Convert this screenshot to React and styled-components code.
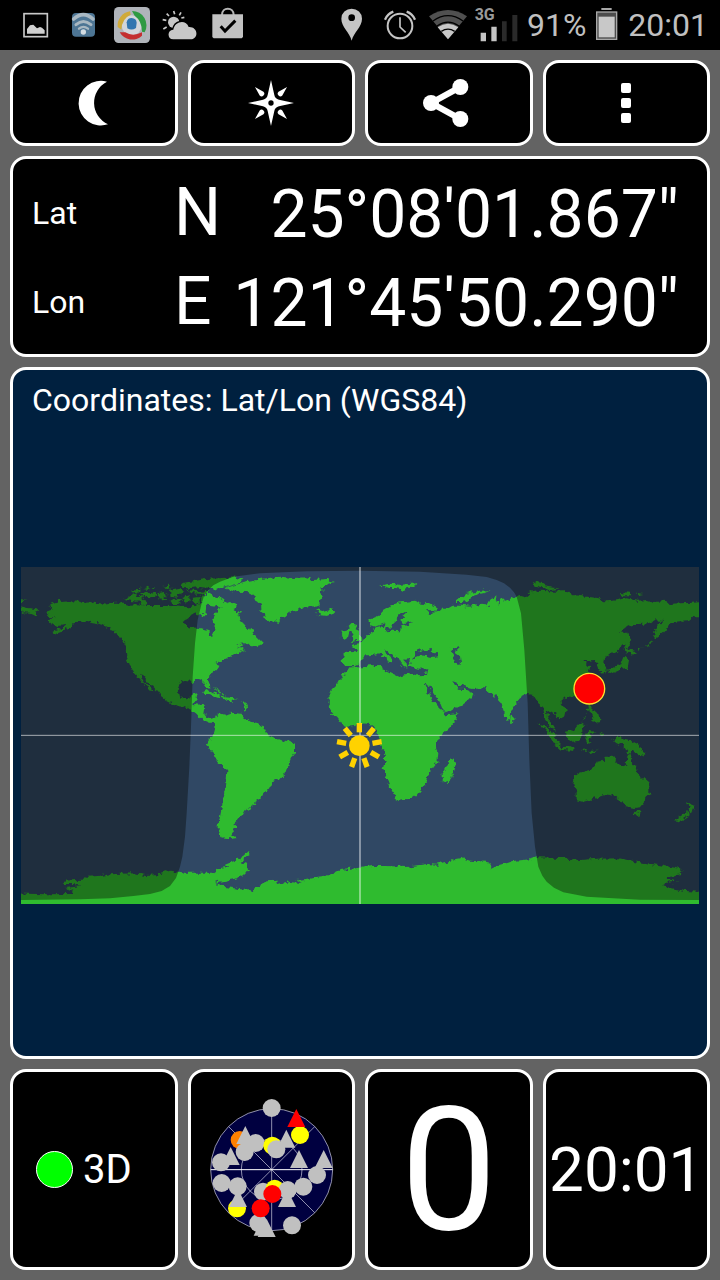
import styled, { createGlobalStyle } from 'styled-components';

const GlobalStyle = createGlobalStyle`
  * {
    box-sizing: border-box;
  }
  body {
    margin: 0;
    background: #636363;
    color: #fff;
    font-family: Roboto, 'Liberation Sans', sans-serif;
  }
`;

const Page = styled.div`
  display: flex;
  flex-direction: column;
  min-height: 100vh;
`;

const StatusBar = styled.header`
  display: flex;
  justify-content: space-between;
  align-items: center;
  height: 50px;
  padding: 0 12px 0 18px;
  background: #000;
  color: #c0c0c0;
`;

const StatusGroup = styled.div`
  display: flex;
  align-items: center;
  gap: ${(props) => props.$gap}px;
`;

const StatusIcon = styled.svg`
  display: block;
  flex: none;
  overflow: visible;
  width: ${(props) => props.$width || 36}px;
  height: 36px;
`;

const StatusText = styled.span`
  font-size: 32px;
  line-height: 36px;
`;

const Main = styled.main`
  flex: 1;
  display: flex;
  flex-direction: column;
  gap: 10px;
  padding: 10px;
`;

const Row = styled.div`
  display: grid;
  grid-template-columns: repeat(4, 1fr);
  gap: 10px;
`;

const ToolButton = styled.button`
  display: flex;
  align-items: center;
  justify-content: center;
  height: 86px;
  padding: 0;
  border: 3px solid #fff;
  border-radius: 16px;
  background: #000;
  color: #fff;
  cursor: pointer;

  & svg {
    width: 50px;
    height: 50px;
    overflow: visible;
  }
`;

const Panel = styled.section`
  border: 3px solid #fff;
  border-radius: 16px;
  background: #000;
`;

const Position = styled(Panel)`
  height: 201px;
  padding: 9px 28px 8px 19px;
`;

const PositionLine = styled.div`
  display: grid;
  grid-template-columns: 142px auto 1fr;
  align-items: center;
  height: 89px;
`;

const Label = styled.span`
  font-size: 32px;
`;

const Hemisphere = styled.span`
  font-size: 66px;
`;

const Degrees = styled.span`
  padding-top: 4px;
  font-size: 66px;
  text-align: right;
  white-space: nowrap;
`;

const MapPanel = styled(Panel)`
  flex: 1;
  display: flex;
  flex-direction: column;
  padding: 0 8px;
  background: #00203f;
`;

const MapTitle = styled.h1`
  margin: 0;
  padding: 14px 11px 0;
  font-size: 32px;
  font-weight: 400;
  line-height: 32px;
`;

const MapArea = styled.div`
  flex: 1;
  display: flex;
  align-items: center;
  padding-bottom: 2px;

  & svg {
    display: block;
    width: 100%;
  }
`;

const Cell = styled(Panel)`
  display: flex;
  align-items: center;
  justify-content: ${(props) => (props.$start ? 'flex-start' : 'center')};
  gap: 10px;
  height: 201px;
  padding-left: ${(props) => (props.$start ? 23 : 0)}px;
  font-size: ${(props) => props.$size || 40}px;
  line-height: 1;
`;

const FixDot = styled.span`
  width: 37px;
  height: 37px;
  border: 1px solid #fff;
  border-radius: 50%;
  background: #00ff00;
`;

const land = [
  // north america
  'M75 157L100 147L92 140L84 138L90 132L118 122L128 126L150 124L180 125L186 129L215 127L250 134L262 130L290 128L330 134L355 133L380 138L420 138L450 138L480 140L510 142L530 135L545 130L548 105L560 108L566 92L575 108L598 112L612 120L618 130L630 126L650 135L655 145L640 150L665 158L655 166L660 180L672 192L685 206L700 212L710 230L725 245L722 258L708 262L695 258L680 252L668 243L658 248L672 252L650 262L665 262L675 270L660 275L655 282L640 280L632 290L610 295L604 304L590 308L597 322L585 335L565 346L564 360L570 375L571 390L562 385L552 366L540 358L525 357L518 366L495 362L478 370L473 390L478 412L500 418L512 412L515 403L533 400L530 415L522 425L520 432L548 435L552 445L550 460L560 472L578 476L590 470L585 490L570 488L545 478L530 462L515 450L490 440L470 437L440 422L420 405L405 385L385 368L372 352L360 345L372 366L390 382L400 391L385 388L370 368L345 340L332 322L322 295L320 260L313 245L300 235L290 218L276 212L270 203L258 200L250 195L235 190L215 187L200 182L185 185L165 186L150 200L135 210L100 222L98 215L130 203L140 195L110 198L95 192L86 184L88 176L105 172L85 171L90 162Z',
  // arctic islands
  'M313 118L330 106L345 100L350 110L372 110L366 122L345 125Z M355 124L372 120L385 130L372 138Z M330 95L345 87L362 88L352 98Z M360 98L395 96L410 104L392 112L368 110Z M372 84L384 80L390 88Z M395 84L408 82L402 90Z M428 78L446 74L458 84L440 90Z M412 100L432 96L446 104L430 112L440 122L420 124Z M450 92L480 86L492 98L470 104L478 114L452 110Z M448 122L470 116L488 122L475 132L455 132Z M486 112L510 106L512 122L496 128Z M516 114L538 110L540 128L524 132Z M500 90L535 94L562 96L575 102L548 102L515 100Z M485 70L505 66L560 57L640 52L665 58L645 68L600 77L580 85L540 81L512 84L490 80Z M580 74L610 58L670 56L662 68L618 80L574 90Z',
  // greenland, iceland, svalbard
  'M612 84L665 70L680 64L710 58L780 50L820 54L860 52L880 60L920 57L945 66L920 73L925 80L900 82L912 90L900 98L908 108L905 118L898 128L900 136L888 140L865 135L850 143L840 145L828 154L810 155L796 168L785 170L775 190L768 184L750 185L735 175L732 165L725 155L723 135L712 126L705 110L690 98L680 96L645 95Z M885 155L898 149L905 153L918 149L940 148L945 158L920 168L895 165L904 160Z M1080 76L1110 71L1140 74L1192 70L1186 81L1165 80L1150 89L1128 84L1108 84Z',
  // british isles
  'M985 202L995 191L1010 194L1004 206L1020 214L1020 226L1031 234L1024 243L1008 243L992 247L1000 238L992 232L998 222L988 216Z M962 231L970 222L966 212L985 208L988 216L984 232L970 237Z',
  // eurasia and africa
  'M975 318L968 300L972 280L985 276L1008 277L1012 266L994 256L1003 252L1018 250L1030 240L1042 226L1060 216L1067 202L1083 198L1090 205L1098 198L1092 190L1065 200L1052 196L1048 176L1075 168L1090 152L1108 142L1115 133L1145 127L1185 122L1200 128L1222 130L1250 143L1248 152L1218 150L1228 160L1250 156L1260 146L1282 146L1298 137L1320 137L1350 140L1380 134L1402 136L1412 118L1428 110L1436 134L1442 114L1456 122L1470 116L1500 108L1514 112L1530 98L1560 92L1605 95L1645 93L1660 106L1700 110L1740 115L1756 124L1780 122L1820 115L1850 122L1880 120L1904 127L1930 122L1950 132L1980 130L2020 128L2060 125L2060 172L2020 172L2010 180L1990 182L1980 187L1950 190L1942 206L1930 220L1910 235L1900 228L1900 212L1912 196L1930 183L1900 181L1890 190L1860 192L1840 192L1822 200L1800 218L1820 218L1826 232L1815 250L1790 272L1760 285L1752 295L1750 310L1758 332L1745 338L1735 320L1738 310L1720 300L1705 303L1690 303L1702 317L1716 318L1700 330L1712 345L1705 380L1660 408L1640 412L1625 418L1625 430L1640 450L1636 468L1618 478L1605 462L1590 452L1580 455L1588 480L1605 498L1610 516L1590 502L1575 478L1570 442L1555 430L1540 405L1525 402L1500 415L1485 432L1475 450L1470 475L1463 480L1452 462L1440 425L1430 406L1422 410L1410 395L1395 385L1360 387L1340 383L1330 386L1360 400L1356 412L1340 425L1320 440L1305 445L1272 456L1275 463L1312 460L1308 478L1290 502L1270 520L1258 530L1248 545L1248 565L1255 580L1252 605L1232 630L1225 645L1222 665L1195 700L1170 717L1145 718L1125 723L1122 705L1110 680L1102 660L1088 625L1095 600L1095 585L1084 558L1080 540L1073 520L1070 510L1050 492L1020 490L1000 498L980 500L962 488L955 478L937 458L925 442L930 425L925 410L935 388L955 368L970 340L990 322L1020 318Z',
  // islands of the northern seas
  'M1308 126L1318 118L1340 101L1380 92L1412 91L1396 98L1362 106L1346 112L1350 120L1330 126Z M1535 70L1552 65L1572 70L1580 80L1620 86L1590 90L1572 84L1550 79Z M1800 96L1830 98L1835 106L1810 106Z M1845 98L1870 102L1850 106Z M-15 118L20 123L-15 129Z M-15 135L20 143L50 148L57 155L44 165L30 158L14 157L-15 164Z',
  // japan and sakhalin
  'M1820 214L1834 238L1828 262L1818 266L1814 248Z M1814 264L1832 270L1850 274L1838 286L1828 278L1818 284Z M1812 290L1824 300L1820 324L1798 328L1780 336L1764 340L1770 326L1790 320L1804 312Z M1752 330L1764 328L1758 342Z M1854 268L1868 266L1856 274Z M1878 262L1890 248L1897 244L1888 258Z',
  // philippines, sri lanka
  'M1702 437L1715 437L1714 450L1726 456L1735 460L1738 485L1730 492L1722 482L1712 480L1724 472L1718 462L1706 455Z M1685 485L1702 456L1694 476Z M1472 464L1484 476L1482 488L1470 488Z',
  // indonesia and new guinea
  'M1555 489L1575 496L1592 514L1605 520L1612 540L1622 548L1620 566L1604 556L1585 522L1570 505Z M1620 562L1640 560L1664 566L1662 573L1630 570Z M1635 515L1660 510L1672 494L1685 486L1696 495L1685 505L1688 520L1678 542L1650 546L1638 532Z M1700 520L1712 514L1730 516L1706 524L1716 530L1708 536L1714 552L1702 548L1696 534Z M1682 570L1702 568L1696 576Z M1706 572L1736 572L1712 580Z M1742 515L1750 520L1746 534Z M1770 535L1782 546L1795 530L1830 540L1846 552L1858 556L1862 572L1876 580L1872 588L1852 584L1840 574L1826 580L1814 560L1790 550Z',
  // australia and new zealand
  'M1665 648L1680 638L1700 632L1715 628L1724 612L1735 605L1750 602L1758 590L1775 590L1788 594L1786 606L1812 622L1820 615L1822 585L1828 580L1836 606L1846 620L1852 638L1870 655L1888 670L1888 700L1870 730L1860 742L1842 744L1815 738L1810 725L1800 722L1785 710L1750 706L1720 718L1690 725L1670 720L1670 700L1660 670Z M1840 752L1862 755L1858 772L1844 764Z M1998 724L2012 734L2026 738L2020 754L2010 760L2006 742Z M2004 754L2006 766L1990 776L1980 787L1962 784L1982 768Z',
  // madagascar
  'M1300 592L1308 610L1302 632L1292 664L1280 672L1268 664L1268 638L1280 616Z',
  // south america
  'M560 555L570 540L580 515L585 495L580 480L600 460L614 464L630 458L650 460L665 462L672 475L695 488L712 492L726 496L738 510L745 525L760 532L780 540L806 544L825 554L825 576L812 594L804 615L796 638L780 656L755 665L748 684L738 696L722 716L702 728L706 736L690 742L674 750L665 766L655 778L642 790L650 800L640 812L632 822L650 834L630 838L608 835L595 820L597 785L606 740L608 718L618 680L622 635L610 618L590 602L575 575Z',
  // caribbean
  'M545 402L560 393L590 400L612 412L590 410L565 402Z M605 411L640 414L656 421L622 424Z M580 380L586 384L600 392L616 408L602 400Z M664 420L676 426L681 442L677 457L674 440Z',
  // antarctica
  'M-15 1000L80 1003L160 1002L160 992L135 984L185 979L160 972L130 972L130 962L185 959L200 950L240 948L270 943L340 940L380 945L420 942L450 932L500 938L580 938L600 925L625 920L615 914L650 900L672 886L682 874L695 880L680 892L662 906L680 912L684 930L672 946L640 958L585 968L610 980L695 992L712 978L740 964L768 962L772 976L810 966L850 970L828 960L858 957L920 950L960 930L1020 923L1060 918L1100 918L1160 921L1220 912L1250 914L1280 905L1310 896L1325 894L1350 902L1400 905L1412 908L1410 928L1440 914L1480 903L1530 898L1550 892L1610 893L1680 900L1730 896L1800 895L1850 905L1930 917L1985 928L1975 936L1985 942L1950 948L1940 956L1975 965L1935 968L1930 976L1950 984L1990 992L2060 997L2060 1055L-15 1055Z',
];

const water = [
  // hudson bay
  'M488 186L505 175L508 166L530 160L535 166L556 166L558 142L566 134L590 138L603 144L588 158L580 175L584 196L582 215L572 233L566 214L548 208L528 206L502 198Z',
  // mediterranean
  'M985 322L1002 318L1022 313L1026 300L1040 286L1065 284L1080 279L1094 290L1104 298L1108 308L1116 310L1122 300L1112 290L1096 280L1094 270L1104 276L1118 282L1132 292L1140 308L1150 320L1162 326L1160 310L1150 300L1166 298L1172 306L1166 322L1196 326L1222 325L1218 345L1190 346L1168 340L1136 348L1106 334L1090 328L1085 315L1050 316L1025 322Z',
  // black sea, caspian, baltic
  'M1172 296L1184 288L1188 274L1206 267L1214 274L1224 272L1230 263L1236 268L1234 276L1250 282L1253 290L1226 290L1206 286L1190 292Z M1292 268L1306 264L1320 261L1310 270L1308 280L1320 288L1323 310L1314 315L1303 306L1304 288Z M1120 188L1132 178L1142 164L1158 156L1160 160L1146 172L1144 184L1154 190L1178 184L1172 192L1150 194L1142 202L1140 214L1118 212L1098 214L1100 202L1116 204Z',
  // red sea, persian gulf
  'M1213 366L1224 374L1240 400L1262 430L1272 456L1258 446L1240 420L1226 396Z M1297 360L1306 362L1314 376L1326 374L1342 380L1336 387L1314 386Z',
];

const night =
  'M3 1020L180 1018L270 1015L340 1008L390 1002L425 993L450 978L468 954L480 920L487 890L495 830L500 760L508 620L513 500L518 350L525 250L533 180L545 130L552 108L565 90L580 76L600 65L640 50L720 40L860 34L1020 32L1200 35L1340 44L1400 51L1430 60L1452 70L1470 83L1482 97L1490 110L1503 160L1513 270L1523 430L1528 600L1535 760L1545 860L1555 920L1567 947L1580 965L1602 983L1630 997L1700 1010L1860 1019L2037 1020L2037 21L3 21Z';

function WorldMap() {
  return (
    <svg viewBox="3 21 2034 1011" role="img" aria-label="World map">
      {/* roughens the coast lines a little */}
      <filter
        id="coast"
        filterUnits="userSpaceOnUse"
        x="-20"
        y="0"
        width="2080"
        height="1060"
        colorInterpolationFilters="sRGB"
      >
        <feTurbulence type="fractalNoise" baseFrequency="0.07" numOctaves="2" seed="4" result="noise" />
        <feDisplacementMap
          in="SourceGraphic"
          in2="noise"
          scale="20"
          xChannelSelector="R"
          yChannelSelector="G"
        />
      </filter>
      <rect x="3" y="21" width="2034" height="1011" fill="#304864" />
      <g filter="url(#coast)">
        <g fill="#2fbb2f">
          {land.map((d, i) => (
            <path key={i} d={d} />
          ))}
        </g>
        <g fill="#304864">
          {water.map((d, i) => (
            <path key={i} d={d} />
          ))}
        </g>
      </g>
      <path d={night} fill="#040400" opacity="0.38" />
      <path d="M3 526H2037" stroke="#fff" strokeWidth="3" opacity="0.6" />
      <path d="M1020 21V1032" stroke="#fff" strokeWidth="5" opacity="0.5" />
      <g transform="translate(1018 557)" fill="#ffd200">
        <circle r="31" />
        {[0, 40, 80, 120, 160, 200, 240, 280, 320].map((angle) => (
          <rect key={angle} x="-8" y="-68" width="16" height="28" transform={`rotate(${angle})`} />
        ))}
      </g>
      <circle cx="1708" cy="386" r="46" fill="#ff0000" stroke="#ffe030" strokeWidth="4" />
    </svg>
  );
}

// drawn in order, later ones cover earlier ones
const satellites = [
  ['circle', 242, 84, '#c0c0c0'],
  ['circle', 327, 165, '#ffff00'],
  ['triangle', 316, 114, '#ff0000'],
  ['circle', 146, 180, '#ff8000'],
  ['triangle', 163, 165, '#c0c0c0'],
  ['circle', 194, 189, '#c0c0c0'],
  ['circle', 161, 216, '#c0c0c0'],
  ['circle', 244, 197, '#ffff00'],
  ['triangle', 286, 176, '#c0c0c0'],
  ['circle', 256, 208, '#c0c0c0'],
  ['triangle', 119, 228, '#c0c0c0'],
  ['circle', 90, 247, '#c0c0c0'],
  ['triangle', 324, 237, '#c0c0c0'],
  ['triangle', 398, 237, '#c0c0c0'],
  ['circle', 378, 285, '#c0c0c0'],
  ['circle', 337, 320, '#c0c0c0'],
  ['circle', 92, 309, '#c0c0c0'],
  ['circle', 140, 319, '#c0c0c0'],
  ['circle', 138, 385, '#ffff00'],
  ['triangle', 141, 354, '#c0c0c0'],
  ['circle', 216, 335, '#c0c0c0'],
  ['circle', 251, 326, '#ffff00'],
  ['circle', 290, 330, '#c0c0c0'],
  ['triangle', 288, 354, '#c0c0c0'],
  ['circle', 244, 342, '#ff0000'],
  ['circle', 202, 429, '#c0c0c0'],
  ['triangle', 215, 440, '#c0c0c0'],
  ['triangle', 227, 444, '#c0c0c0'],
  ['circle', 209, 385, '#ff0000'],
  ['circle', 303, 436, '#c0c0c0'],
];

function SkyPlot() {
  return (
    <svg viewBox="0 0 480 540" width="160" height="180" role="img" aria-label="Satellites in view">
      <g stroke="#d8d8e8" strokeWidth="2">
        <circle cx="242" cy="269" r="183" fill="#000040" />
        <circle cx="242" cy="269" r="91" fill="none" />
        <path d="M242 86V452M113 140L371 398M371 140L113 398" />
        <path d="M59 269H425" stroke="#fff" strokeWidth="3" />
      </g>
      {satellites.map(([shape, x, y, color], i) =>
        shape === 'circle' ? (
          <circle key={i} cx={x} cy={y} r="27" fill={color} />
        ) : (
          <path key={i} d={`M${x} ${y - 27}L${x + 27} ${y + 27}H${x - 27}Z`} fill={color} />
        )
      )}
    </svg>
  );
}

const MoonIcon = () => (
  <svg viewBox="0 0 150 150" aria-hidden="true">
    <path d="M114 11A67 67 0 1 0 117 139A71 71 0 0 1 114 11Z" fill="currentColor" />
  </svg>
);

const CompassIcon = () => (
  <svg viewBox="-75 -75 150 150" fill="currentColor" aria-hidden="true">
    <path d="M0-69L10-24Q12-13 24-10L69 0L24 10Q12 13 10 24L0 69L-10 24Q-12 13-24 10L-69 0L-24-10Q-12-13-10-24Z" />
    {[45, 135, 225, 315].map((angle) => (
      <path key={angle} d="M0-68L8-40A8 8 0 1 1-8-40Z" transform={`rotate(${angle})`} />
    ))}
    <circle r="8" fill="#000" />
  </svg>
);

const ShareIcon = () => (
  <svg viewBox="-75 -75 150 150" fill="currentColor" aria-hidden="true">
    <path d="M34-48L-54 0L34 48" fill="none" stroke="currentColor" strokeWidth="18" />
    <circle cx="34" cy="-48" r="24" />
    <circle cx="34" cy="48" r="24" />
    <circle cx="-54" cy="0" r="24" />
  </svg>
);

const MenuIcon = () => (
  <svg viewBox="-75 -75 150 150" fill="currentColor" aria-hidden="true">
    <rect x="-15" y="-60" width="30" height="30" rx="6" />
    <rect x="-15" y="-15" width="30" height="30" rx="6" />
    <rect x="-15" y="30" width="30" height="30" rx="6" />
  </svg>
);

function Notifications() {
  return (
    <StatusGroup $gap={12}>
      <StatusIcon viewBox="0 0 108 108" aria-hidden="true">
        <rect x="18" y="20" width="70" height="69" fill="none" stroke="#c8c8c8" strokeWidth="5" />
        <path d="M27 80V66L36 55L46 53L57 64L66 60L72 62L80 70V80Z" fill="#d0d0d0" />
      </StatusIcon>
      <StatusIcon viewBox="0 0 108 108" aria-hidden="true">
        <rect x="18" y="18" width="69" height="71" rx="12" fill="#4d7594" />
        <g fill="none" stroke="#a9b8c2" strokeLinecap="round">
          <path d="M23 36Q52 10 81 36" strokeWidth="11" />
          <path d="M30 53Q52 34 75 53" strokeWidth="9" />
          <path d="M39 65Q52 54 66 65" strokeWidth="7" />
        </g>
        <circle cx="52" cy="75" r="8" fill="#d4dce2" />
      </StatusIcon>
      <StatusIcon viewBox="0 0 108 108" aria-hidden="true">
        <rect width="108" height="108" rx="14" fill="#b0b4ba" />
        <circle cx="53" cy="55" r="30" fill="#d3d6da" />
        <path d="M54 12A43 43 0 0 1 92 76L84 74Q84 42 62 26Z" fill="#2f9a42" />
        <path d="M11 60A43 43 0 0 1 48 13L50 23Q24 34 22 68Z" fill="#d0aa38" />
        <path d="M17 76A43 43 0 0 0 84 86L84 76Q56 90 34 76Z" fill="#c42f30" />
        <path d="M40 64L38 46Q40 33 53 33Q67 34 68 47L66 63Q53 72 40 64Z" fill="#3276b0" />
      </StatusIcon>
      <StatusIcon viewBox="0 0 108 108" fill="#c8c8c8" aria-hidden="true">
        <path
          d="M35 12L38 22M57 16L52 25M14 20L21 27M67 31L58 33M2 38L13 40M4 66L14 60"
          stroke="#c8c8c8"
          strokeWidth="5"
        />
        <circle cx="35" cy="46" r="17" />
        <path
          d="M34 97C14 97 16 67 34 68C38 42 72 36 80 60C108 58 112 96 86 97Z"
          stroke="#000"
          strokeWidth="8"
          paintOrder="stroke"
        />
      </StatusIcon>
      <StatusIcon viewBox="0 0 108 108" aria-hidden="true">
        <path d="M36 24C36-1 71-1 71 24" fill="none" stroke="#b4b4b4" strokeWidth="6" />
        <path d="M7 22H99V90L95 94H11L7 90Z" fill="#c2c2c2" />
        <path d="M32 58L45 72L76 41" fill="none" stroke="#000" strokeWidth="9" />
      </StatusIcon>
    </StatusGroup>
  );
}

function SystemStatus() {
  return (
    <StatusGroup $gap={10}>
      <StatusIcon $width={38} viewBox="0 0 114 108" aria-hidden="true">
        <path
          d="M56 101C50 76 25 60 25 35A31 30 0 0 1 87 35C87 60 62 76 56 101ZM56 22A10 10 0 1 0 56 42A10 10 0 1 0 56 22Z"
          fill="#c4c4c4"
          fillRule="evenodd"
        />
      </StatusIcon>
      <StatusIcon $width={38} viewBox="0 0 114 108" fill="none" stroke="#c4c4c4" aria-hidden="true">
        <circle cx="57" cy="57" r="37" strokeWidth="6" />
        <path d="M57 31V60L74 76" strokeWidth="5" />
        <path d="M12 38Q20 20 37 14M102 38Q94 20 77 14" strokeWidth="7" />
      </StatusIcon>
      <StatusIcon $width={38} viewBox="0 0 114 108" aria-hidden="true">
        <path d="M0 28Q57-10 114 28L57 96Z" fill="#505050" />
        <path d="M26 61Q57 40 88 61L57 97Z" fill="#c8c8c8" />
        <path
          d="M12 42Q57 10 102 42M24 57Q57 34 90 57M37 73Q57 60 77 73"
          fill="none"
          stroke="#000"
          strokeWidth="4"
        />
      </StatusIcon>
      <StatusIcon $width={40} viewBox="0 0 120 108" fill="#c4c4c4">
        <text x="-7" y="39" fontSize="48" fontWeight="700" fill="#9a9a9a">
          3G
        </text>
        <path d="M11 77H27V103H11ZM43 59H59V103H43Z" />
        <path d="M75 43H89V103H75ZM106 24H121V103H106Z" fill="#2a2a2a" />
      </StatusIcon>
      <StatusText>91%</StatusText>
      <StatusIcon $width={22} viewBox="0 0 66 108" aria-hidden="true">
        <path d="M16 3H47V9H16Z" fill="#a8a8a8" />
        <rect x="2" y="15" width="60" height="82" fill="#4c4c4c" stroke="#a8a8a8" strokeWidth="4" />
        <rect x="8" y="29" width="48" height="62" fill="#c8c8c8" />
      </StatusIcon>
      <StatusText>20:01</StatusText>
    </StatusGroup>
  );
}

export default function App() {
  return (
    <Page>
      <GlobalStyle />
      <StatusBar>
        <Notifications />
        <SystemStatus />
      </StatusBar>
      <Main>
        <Row>
          <ToolButton aria-label="Night mode">
            <MoonIcon />
          </ToolButton>
          <ToolButton aria-label="Compass">
            <CompassIcon />
          </ToolButton>
          <ToolButton aria-label="Share">
            <ShareIcon />
          </ToolButton>
          <ToolButton aria-label="Menu">
            <MenuIcon />
          </ToolButton>
        </Row>
        <Position>
          <PositionLine>
            <Label>Lat</Label>
            <Hemisphere>N</Hemisphere>
            <Degrees>25°08'01.867"</Degrees>
          </PositionLine>
          <PositionLine>
            <Label>Lon</Label>
            <Hemisphere>E</Hemisphere>
            <Degrees>121°45'50.290"</Degrees>
          </PositionLine>
        </Position>
        <MapPanel>
          <MapTitle>Coordinates: Lat/Lon (WGS84)</MapTitle>
          <MapArea>
            <WorldMap />
          </MapArea>
        </MapPanel>
        <Row>
          <Cell $start>
            <FixDot />
            <span>3D</span>
          </Cell>
          <Cell>
            <SkyPlot />
          </Cell>
          <Cell $size={172}>0</Cell>
          <Cell $size={62}>20:01</Cell>
        </Row>
      </Main>
    </Page>
  );
}
